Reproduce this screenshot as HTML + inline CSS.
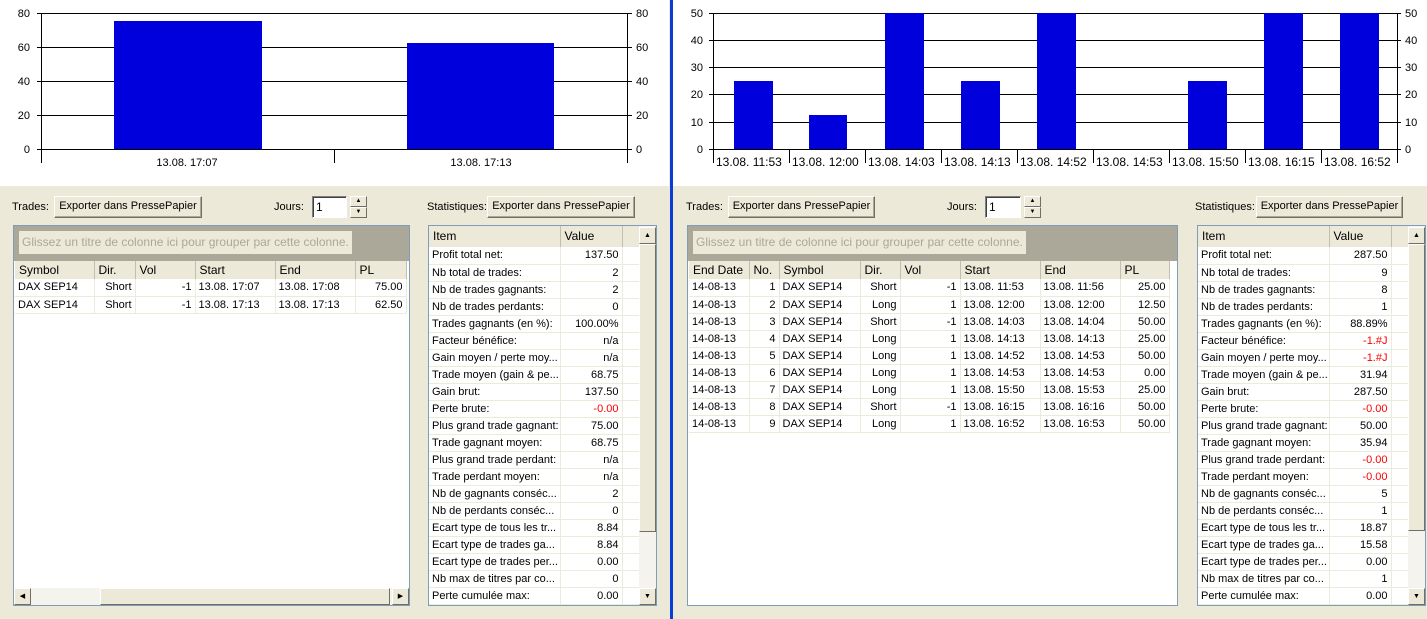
<!DOCTYPE html>
<html><head><meta charset="utf-8">
<style>
*{margin:0;padding:0;box-sizing:border-box}
body{width:1427px;height:619px;background:#ECE9D8;font-family:"Liberation Sans",sans-serif;font-size:11px;color:#000;position:relative;overflow:hidden}
.a{position:absolute}
.btn{position:absolute;height:22px;background:#ECE9D8;border:1px solid;border-color:#fff #716F64 #716F64 #fff;box-shadow:inset -1px -1px 0 #ACA899;text-align:center;line-height:19px;font-size:11px}
.inp{position:absolute;height:22px;background:#fff;border:1px solid;border-color:#808080 #fff #fff #808080;box-shadow:inset 1px 1px 0 #404040;padding-left:3px;line-height:20px;font-size:12px}
.spin{position:absolute;width:17px;height:22px}
.spin div{height:11px;background:#ECE9D8;border:1px solid;border-color:#fff #716F64 #716F64 #fff;font-size:6px;text-align:center;line-height:8px}
.box{position:absolute;background:#fff;border:1px solid #7F9DB9;overflow:hidden}
table{border-collapse:collapse;table-layout:fixed;position:absolute}
td{height:17px;border-right:1px solid #EBEADB;border-bottom:1px solid #EBEADB;padding:0 3px;white-space:nowrap;overflow:hidden;font-size:11px;line-height:16px}
tr.h td{background:#ECE9D8;border-right:1px solid #C0BFB0;border-bottom:none;height:18px;font-size:12px;padding-left:4px}
tr.sh td{height:21px;line-height:19px}
.r{text-align:right}.red{color:#f00}
.vs{position:absolute;width:17px;background:#F4F3EE}
.sb{position:absolute;left:0;width:17px;height:17px;background:#ECE9D8;border:1px solid;border-color:#fff #716F64 #716F64 #fff;font-size:7px;text-align:center;line-height:15px}
.thumb{position:absolute;left:0;width:17px;background:#ECE9D8;border:1px solid;border-color:#fff #716F64 #716F64 #fff}
.grp{position:absolute;background:#ACA899}
.grp span{position:absolute;left:5px;top:5px;height:23px;background:#ECE9D8;color:#ACA899;padding:0 3px;line-height:22px;font-size:12px}
</style></head><body>

<div class="a" style="left:0;top:0;width:669px;height:186px;background:#fff"></div>
<div class="a" style="left:673px;top:0;width:754px;height:186px;background:#fff"></div>
<div class="a" style="left:670px;top:0;width:3px;height:619px;background:#0A3CD6"></div>

<svg class="a" style="left:0;top:0" width="669" height="186" font-family="Liberation Sans" font-size="11">
<g stroke="#000" stroke-width="1">
<line x1="41" y1="13.5" x2="627" y2="13.5"/><line x1="41" y1="47.5" x2="627" y2="47.5"/><line x1="41" y1="81.5" x2="627" y2="81.5"/><line x1="41" y1="115.5" x2="627" y2="115.5"/><line x1="37" y1="149.5" x2="632" y2="149.5"/>
<line x1="41.5" y1="13" x2="41.5" y2="163"/><line x1="627.5" y1="13" x2="627.5" y2="163"/><line x1="334.5" y1="149" x2="334.5" y2="163"/>
<line x1="37" y1="13.5" x2="41" y2="13.5"/><line x1="37" y1="47.5" x2="41" y2="47.5"/><line x1="37" y1="81.5" x2="41" y2="81.5"/><line x1="37" y1="115.5" x2="41" y2="115.5"/>
<line x1="627" y1="13.5" x2="632" y2="13.5"/><line x1="627" y1="47.5" x2="632" y2="47.5"/><line x1="627" y1="81.5" x2="632" y2="81.5"/><line x1="627" y1="115.5" x2="632" y2="115.5"/>
</g>
<rect x="114" y="21" width="148" height="128" fill="#0000DD"/>
<rect x="407" y="43" width="147" height="106" fill="#0000DD"/>
<g text-anchor="end"><text x="30" y="17">80</text><text x="30" y="51">60</text><text x="30" y="85">40</text><text x="30" y="119">20</text><text x="30" y="153">0</text></g>
<g><text x="636" y="17">80</text><text x="636" y="51">60</text><text x="636" y="85">40</text><text x="636" y="119">20</text><text x="636" y="153">0</text></g>
<text x="187" y="166" text-anchor="middle">13.08. 17:07</text><text x="481" y="166" text-anchor="middle">13.08. 17:13</text>
</svg>

<svg class="a" style="left:673px;top:0" width="754" height="186" font-family="Liberation Sans" font-size="11">
<g transform="translate(-673,0)">
<g stroke="#000" stroke-width="1">
<line x1="709" y1="13.5" x2="1401" y2="13.5"/><line x1="709" y1="40.5" x2="1401" y2="40.5"/><line x1="709" y1="67.5" x2="1401" y2="67.5"/><line x1="709" y1="94.5" x2="1401" y2="94.5"/><line x1="709" y1="122.5" x2="1401" y2="122.5"/><line x1="709" y1="149.5" x2="1401" y2="149.5"/>
<line x1="713.5" y1="13" x2="713.5" y2="163"/><line x1="789.5" y1="149" x2="789.5" y2="163"/><line x1="865.5" y1="149" x2="865.5" y2="163"/><line x1="941.5" y1="149" x2="941.5" y2="163"/><line x1="1017.5" y1="149" x2="1017.5" y2="163"/><line x1="1093.5" y1="149" x2="1093.5" y2="163"/><line x1="1169.5" y1="149" x2="1169.5" y2="163"/><line x1="1245.5" y1="149" x2="1245.5" y2="163"/><line x1="1321.5" y1="149" x2="1321.5" y2="163"/><line x1="1397.5" y1="13" x2="1397.5" y2="163"/>
</g>
<g fill="#0000DD">
<rect x="734" y="81" width="39" height="68"/><rect x="809" y="115" width="38" height="34"/><rect x="885" y="13" width="39" height="136"/><rect x="961" y="81" width="39" height="68"/><rect x="1037" y="13" width="39" height="136"/><rect x="1188" y="81" width="39" height="68"/><rect x="1264" y="13" width="39" height="136"/><rect x="1340" y="13" width="39" height="136"/>
</g>
<g text-anchor="end"><text x="703" y="17">50</text><text x="703" y="44">40</text><text x="703" y="71">30</text><text x="703" y="98">20</text><text x="703" y="126">10</text><text x="703" y="153">0</text></g>
<g><text x="1405" y="17">50</text><text x="1405" y="44">40</text><text x="1405" y="71">30</text><text x="1405" y="98">20</text><text x="1405" y="126">10</text><text x="1405" y="153">0</text></g>
<g font-size="12"><text x="716" y="166">13.08. 11:53</text><text x="792" y="166">13.08. 12:00</text><text x="868" y="166">13.08. 14:03</text><text x="944" y="166">13.08. 14:13</text><text x="1020" y="166">13.08. 14:52</text><text x="1096" y="166">13.08. 14:53</text><text x="1172" y="166">13.08. 15:50</text><text x="1248" y="166">13.08. 16:15</text><text x="1324" y="166">13.08. 16:52</text></g>
</g>
</svg>

<!-- LEFT controls -->
<div class="a" style="left:12px;top:201px">Trades:</div>
<div class="btn" style="left:54px;top:196px;width:148px">Exporter dans PressePapier</div>
<div class="a" style="left:274px;top:201px">Jours:</div>
<div class="inp" style="left:312px;top:196px;width:35px">1</div>
<div class="spin" style="left:350px;top:196px"><div>▲</div><div>▼</div></div>
<div class="a" style="left:427px;top:201px">Statistiques:</div>
<div class="btn" style="left:487px;top:196px;width:148px">Exporter dans PressePapier</div>

<div class="box" style="left:13px;top:225px;width:397px;height:381px">
<div class="grp" style="left:0;top:0;width:395px;height:35px"><span>Glissez un titre de colonne ici pour grouper par cette colonne.</span></div>
<table style="left:1px;top:35px;width:391px">
<colgroup><col style="width:79px"><col style="width:41px"><col style="width:60px"><col style="width:80px"><col style="width:80px"><col style="width:51px"></colgroup>
<tr class="h"><td>Symbol</td><td>Dir.</td><td>Vol</td><td>Start</td><td>End</td><td>PL</td></tr>
<tr><td>DAX SEP14</td><td class="r">Short</td><td class="r">-1</td><td>13.08. 17:07</td><td>13.08. 17:08</td><td class="r">75.00</td></tr>
<tr><td>DAX SEP14</td><td class="r">Short</td><td class="r">-1</td><td>13.08. 17:13</td><td>13.08. 17:13</td><td class="r">62.50</td></tr>
</table>
<div class="a" style="left:0;top:362px;width:395px;height:17px;background:#F4F3EE">
<div class="sb" style="top:0">◀</div>
<div class="thumb" style="left:86px;top:0;width:290px;height:17px"></div>
<div class="sb" style="left:378px;top:0">▶</div>
</div>
</div>

<div class="box" style="left:428px;top:225px;width:229px;height:381px">
<table style="left:0;top:0;width:210px">
<colgroup><col style="width:131px"><col style="width:62px"><col style="width:17px"></colgroup>
<tr class="h sh"><td>Item</td><td>Value</td><td></td></tr>
<tr><td>Profit total net:</td><td class="r">137.50</td><td></td></tr>
<tr><td>Nb total de trades:</td><td class="r">2</td><td></td></tr>
<tr><td>Nb de trades gagnants:</td><td class="r">2</td><td></td></tr>
<tr><td>Nb de trades perdants:</td><td class="r">0</td><td></td></tr>
<tr><td>Trades gagnants (en %):</td><td class="r">100.00%</td><td></td></tr>
<tr><td>Facteur bénéfice:</td><td class="r">n/a</td><td></td></tr>
<tr><td>Gain moyen / perte moy...</td><td class="r">n/a</td><td></td></tr>
<tr><td>Trade moyen (gain &amp; pe...</td><td class="r">68.75</td><td></td></tr>
<tr><td>Gain brut:</td><td class="r">137.50</td><td></td></tr>
<tr><td>Perte brute:</td><td class="r red">-0.00</td><td></td></tr>
<tr><td>Plus grand trade gagnant:</td><td class="r">75.00</td><td></td></tr>
<tr><td>Trade gagnant moyen:</td><td class="r">68.75</td><td></td></tr>
<tr><td>Plus grand trade perdant:</td><td class="r">n/a</td><td></td></tr>
<tr><td>Trade perdant moyen:</td><td class="r">n/a</td><td></td></tr>
<tr><td>Nb de gagnants conséc...</td><td class="r">2</td><td></td></tr>
<tr><td>Nb de perdants conséc...</td><td class="r">0</td><td></td></tr>
<tr><td>Ecart type de tous les tr...</td><td class="r">8.84</td><td></td></tr>
<tr><td>Ecart type de trades ga...</td><td class="r">8.84</td><td></td></tr>
<tr><td>Ecart type de trades per...</td><td class="r">0.00</td><td></td></tr>
<tr><td>Nb max de titres par co...</td><td class="r">0</td><td></td></tr>
<tr><td>Perte cumulée max:</td><td class="r">0.00</td><td></td></tr>
</table>
<div class="vs" style="left:210px;top:0;height:379px">
<div class="sb" style="top:1px">▲</div>
<div class="thumb" style="top:18px;height:288px"></div>
<div class="sb" style="top:362px">▼</div>
</div>
</div>

<!-- RIGHT controls -->
<div class="a" style="left:686px;top:201px">Trades:</div>
<div class="btn" style="left:728px;top:196px;width:147px">Exporter dans PressePapier</div>
<div class="a" style="left:947px;top:201px">Jours:</div>
<div class="inp" style="left:985px;top:196px;width:36px">1</div>
<div class="spin" style="left:1024px;top:196px"><div>▲</div><div>▼</div></div>
<div class="a" style="left:1195px;top:201px">Statistiques:</div>
<div class="btn" style="left:1256px;top:196px;width:147px">Exporter dans PressePapier</div>

<div class="box" style="left:687px;top:225px;width:491px;height:381px">
<div class="grp" style="left:0;top:0;width:489px;height:35px"><span>Glissez un titre de colonne ici pour grouper par cette colonne.</span></div>
<table style="left:1px;top:35px;width:480px">
<colgroup><col style="width:60px"><col style="width:30px"><col style="width:81px"><col style="width:40px"><col style="width:60px"><col style="width:80px"><col style="width:80px"><col style="width:49px"></colgroup>
<tr class="h"><td>End Date</td><td>No.</td><td>Symbol</td><td>Dir.</td><td>Vol</td><td>Start</td><td>End</td><td>PL</td></tr>
<tr><td>14-08-13</td><td class="r">1</td><td>DAX SEP14</td><td class="r">Short</td><td class="r">-1</td><td>13.08. 11:53</td><td>13.08. 11:56</td><td class="r">25.00</td></tr>
<tr><td>14-08-13</td><td class="r">2</td><td>DAX SEP14</td><td class="r">Long</td><td class="r">1</td><td>13.08. 12:00</td><td>13.08. 12:00</td><td class="r">12.50</td></tr>
<tr><td>14-08-13</td><td class="r">3</td><td>DAX SEP14</td><td class="r">Short</td><td class="r">-1</td><td>13.08. 14:03</td><td>13.08. 14:04</td><td class="r">50.00</td></tr>
<tr><td>14-08-13</td><td class="r">4</td><td>DAX SEP14</td><td class="r">Long</td><td class="r">1</td><td>13.08. 14:13</td><td>13.08. 14:13</td><td class="r">25.00</td></tr>
<tr><td>14-08-13</td><td class="r">5</td><td>DAX SEP14</td><td class="r">Long</td><td class="r">1</td><td>13.08. 14:52</td><td>13.08. 14:53</td><td class="r">50.00</td></tr>
<tr><td>14-08-13</td><td class="r">6</td><td>DAX SEP14</td><td class="r">Long</td><td class="r">1</td><td>13.08. 14:53</td><td>13.08. 14:53</td><td class="r">0.00</td></tr>
<tr><td>14-08-13</td><td class="r">7</td><td>DAX SEP14</td><td class="r">Long</td><td class="r">1</td><td>13.08. 15:50</td><td>13.08. 15:53</td><td class="r">25.00</td></tr>
<tr><td>14-08-13</td><td class="r">8</td><td>DAX SEP14</td><td class="r">Short</td><td class="r">-1</td><td>13.08. 16:15</td><td>13.08. 16:16</td><td class="r">50.00</td></tr>
<tr><td>14-08-13</td><td class="r">9</td><td>DAX SEP14</td><td class="r">Long</td><td class="r">1</td><td>13.08. 16:52</td><td>13.08. 16:53</td><td class="r">50.00</td></tr>
</table>
</div>

<div class="box" style="left:1197px;top:225px;width:229px;height:381px">
<table style="left:0;top:0;width:210px">
<colgroup><col style="width:131px"><col style="width:62px"><col style="width:17px"></colgroup>
<tr class="h sh"><td>Item</td><td>Value</td><td></td></tr>
<tr><td>Profit total net:</td><td class="r">287.50</td><td></td></tr>
<tr><td>Nb total de trades:</td><td class="r">9</td><td></td></tr>
<tr><td>Nb de trades gagnants:</td><td class="r">8</td><td></td></tr>
<tr><td>Nb de trades perdants:</td><td class="r">1</td><td></td></tr>
<tr><td>Trades gagnants (en %):</td><td class="r">88.89%</td><td></td></tr>
<tr><td>Facteur bénéfice:</td><td class="r red">-1.#J</td><td></td></tr>
<tr><td>Gain moyen / perte moy...</td><td class="r red">-1.#J</td><td></td></tr>
<tr><td>Trade moyen (gain &amp; pe...</td><td class="r">31.94</td><td></td></tr>
<tr><td>Gain brut:</td><td class="r">287.50</td><td></td></tr>
<tr><td>Perte brute:</td><td class="r red">-0.00</td><td></td></tr>
<tr><td>Plus grand trade gagnant:</td><td class="r">50.00</td><td></td></tr>
<tr><td>Trade gagnant moyen:</td><td class="r">35.94</td><td></td></tr>
<tr><td>Plus grand trade perdant:</td><td class="r red">-0.00</td><td></td></tr>
<tr><td>Trade perdant moyen:</td><td class="r red">-0.00</td><td></td></tr>
<tr><td>Nb de gagnants conséc...</td><td class="r">5</td><td></td></tr>
<tr><td>Nb de perdants conséc...</td><td class="r">1</td><td></td></tr>
<tr><td>Ecart type de tous les tr...</td><td class="r">18.87</td><td></td></tr>
<tr><td>Ecart type de trades ga...</td><td class="r">15.58</td><td></td></tr>
<tr><td>Ecart type de trades per...</td><td class="r">0.00</td><td></td></tr>
<tr><td>Nb max de titres par co...</td><td class="r">1</td><td></td></tr>
<tr><td>Perte cumulée max:</td><td class="r">0.00</td><td></td></tr>
</table>
<div class="vs" style="left:210px;top:0;height:379px">
<div class="sb" style="top:1px">▲</div>
<div class="thumb" style="top:18px;height:287px"></div>
<div class="sb" style="top:362px">▼</div>
</div>
</div>

</body></html>
